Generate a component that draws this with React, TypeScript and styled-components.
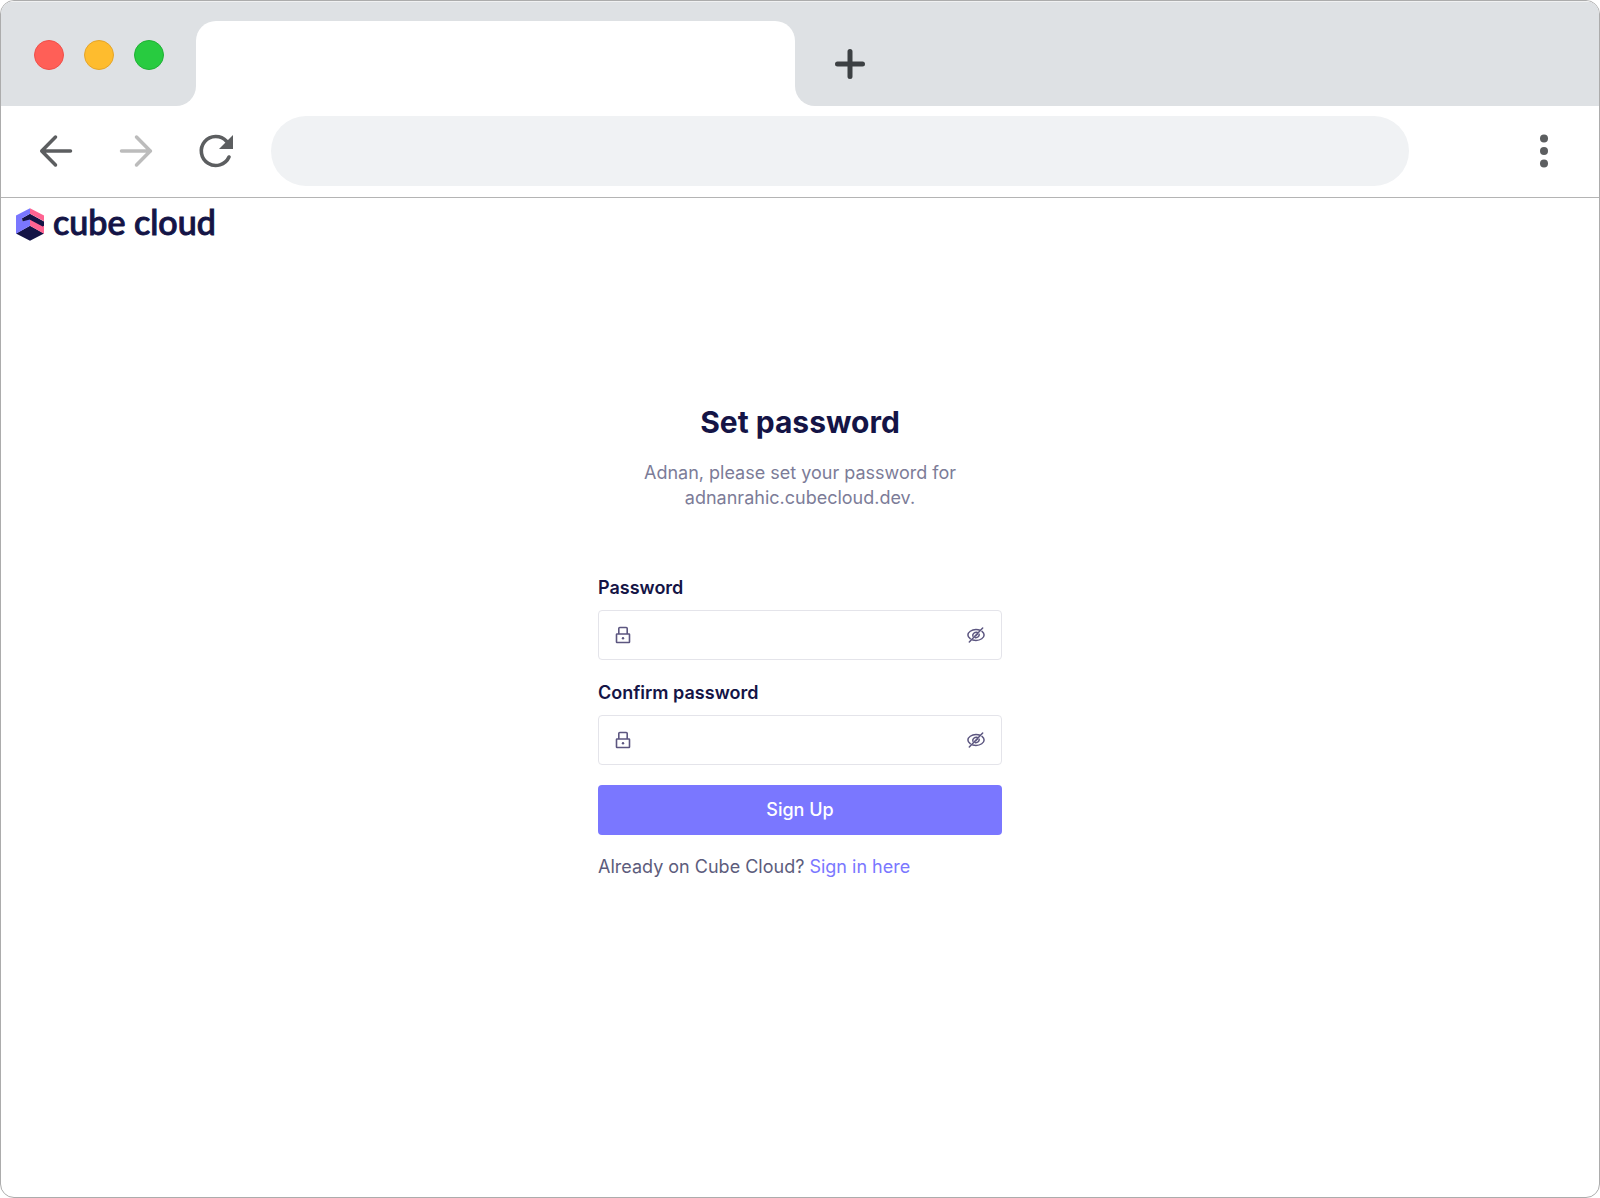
import React, { useId, useState } from "react";
import styled, { createGlobalStyle } from "styled-components";

const GlobalStyle = createGlobalStyle`
  * { box-sizing: border-box; }
  body {
    margin: 0;
    background: #fff;
    font-family: Inter, "Liberation Sans", sans-serif;
    color: #141446;
  }
`;

const Window = styled.div`
  display: flex;
  flex-direction: column;
  min-height: 100vh;
  border: 1px solid #acacac;
  border-radius: 14px;
  overflow: hidden;
  background: #fff;
`;

const TabStrip = styled.div`
  display: flex;
  height: 105px;
  border-top: 1px solid #f0f1f2;
`;

const WindowControls = styled.div`
  display: flex;
  gap: 20px;
  width: 195px;
  padding: 38px 0 0 33px;
  background: #dee1e4;
  border-bottom-right-radius: 20px;
`;

const Light = styled.button<{ $fill: string; $edge: string }>`
  width: 30px;
  height: 30px;
  padding: 0;
  border: 1px solid ${(p) => p.$edge};
  border-radius: 50%;
  background: ${(p) => p.$fill};
`;

const TabSlot = styled.div`
  width: 599px;
  padding-top: 19px;
  background: #dee1e4;
`;

const Tab = styled.div`
  height: 100%;
  background: #fff;
  border-radius: 20px 20px 0 0;
`;

const StripRest = styled.div`
  flex: 1;
  padding: 46px 0 0 39px;
  background: #dee1e4;
  border-bottom-left-radius: 20px;
`;

const IconButton = styled.button`
  display: flex;
  padding: 0;
  border: 0;
  background: none;
  color: #5c5e60;
`;

const Toolbar = styled.div`
  display: flex;
  align-items: center;
  height: 92px;
  padding: 0 50px 2px 37px;
  border-bottom: 1px solid #b4b4b4;
`;

const NavButtons = styled.div`
  display: flex;
  gap: 44px;
  margin-right: 37px;
`;

const Address = styled.input`
  flex: 1;
  min-width: 0;
  height: 70px;
  margin-right: 130px;
  padding: 0 32px;
  border: 0;
  border-radius: 35px;
  background: #f0f2f4;
  font: 24px Inter, sans-serif;
`;

const Brand = styled.header`
  display: flex;
  align-items: flex-start;
  gap: 9px;
  padding: 10px 15px 9px;
`;

const BrandName = styled.span`
  font: 500 34px/28px Lato, "Open Sans", sans-serif;
  -webkit-text-stroke: 1px #141446;
  color: #141446;
`;

const Panel = styled.main`
  display: flex;
  flex-direction: column;
  width: 100%;
  max-width: 404px;
  margin: 0 auto;
  padding-top: 152px;
`;

const Title = styled.h1`
  margin: 0;
  font-size: 30px;
  line-height: 40px;
  font-weight: 700;
  text-align: center;
`;

const Lead = styled.p`
  margin: 18px 40px 65px;
  font-size: 18px;
  line-height: 25px;
  text-align: center;
  color: #7c7c98;
`;

const Form = styled.form`
  display: flex;
  flex-direction: column;
  gap: 20px;
`;

const Field = styled.div`
  display: flex;
  flex-direction: column;
  gap: 10px;
`;

const Label = styled.label`
  font-size: 18px;
  line-height: 25px;
  font-weight: 600;
`;

const InputBox = styled.div`
  display: flex;
  align-items: center;
  gap: 12px;
  height: 50px;
  padding: 0 16px;
  border: 1px solid #e4e4ea;
  border-radius: 4px;
  color: #5c5680;
`;

const Input = styled.input`
  flex: 1;
  min-width: 0;
  border: 0;
  outline: 0;
  background: none;
  font: 18px Inter, sans-serif;
  color: #141446;
`;

const RevealButton = styled(IconButton)`
  color: inherit;
`;

const Submit = styled.button`
  height: 50px;
  padding: 0 16px 2px;
  border: 0;
  border-radius: 4px;
  background: #7a77ff;
  color: #fff;
  font: 500 18px Inter, sans-serif;
`;

const Footnote = styled.p`
  margin: 19px 0 0;
  font-size: 18px;
  line-height: 25px;
  color: #5c5c7c;
`;

const Link = styled.a`
  color: #7a77ff;
  text-decoration: none;
`;

const PlusIcon = () => (
  <svg width="32" height="32" viewBox="0 0 32 32" fill="none" stroke="#3c4043" strokeWidth="5" strokeLinecap="round">
    <path d="M16 3.500v25M3.500 16h25" />
  </svg>
);

const ArrowIcon = ({ forward = false }: { forward?: boolean }) => (
  <svg width="36" height="36" viewBox="0 0 36 36" fill="none" stroke={forward ? "#bcbcbc" : "#5c5e60"} strokeWidth="3.500" strokeLinecap="round" strokeLinejoin="round">
    <path d={forward ? "M3.500 18h29M18.500 4L32.300 18 18.500 32" : "M32.500 18H4M17.500 4L3.700 18l13.800 14"} />
  </svg>
);

const ReloadIcon = () => (
  <svg width="36" height="36" viewBox="0 0 36 36" fill="none">
    <path d="M31 24A14.500 14.500 0 1 1 28.500 8.200" stroke="#5c5e60" strokeWidth="3.600" strokeLinecap="round" />
    <path d="M35 2v14H21z" fill="#5c5e60" />
  </svg>
);

const DotsIcon = () => (
  <svg width="10" height="34" viewBox="0 0 10 34" fill="#5c5e60">
    <circle cx="5" cy="4.500" r="4" />
    <circle cx="5" cy="17" r="4" />
    <circle cx="5" cy="29.500" r="4" />
  </svg>
);

const CubeLogo = () => (
  <svg width="28" height="33" viewBox="0 0 84 98">
    <path d="M42 53L84 76 42 98 0 76z" fill="#141446" />
    <path d="M18 30L42 17l42 23v16l-8 2-34-20-22 6z" fill="#141446" />
    <path d="M42 0v17L18 30v10l24-6v19L0 77V22z" fill="#7a77ff" />
    <path d="M42 0l42 22v17L42 17z" fill="#ff6492" />
    <path d="M42 35l38 20 4-2v24L42 53z" fill="#ff6492" />
  </svg>
);

const LockIcon = () => (
  <svg width="16" height="18" viewBox="0 0 16 18" fill="none" stroke="currentColor" strokeWidth="1.600" strokeLinejoin="round">
    <rect x="1.500" y="8" width="13" height="8.500" rx="0.500" />
    <path d="M3.800 8V2.500A1 1 0 0 1 4.800 1.500h6.400a1 1 0 0 1 1 1V8" />
    <circle cx="8" cy="12.200" r="1.200" fill="currentColor" stroke="none" />
  </svg>
);

const EyeOffIcon = () => (
  <svg width="18" height="18" viewBox="0 0 18 18" fill="none" stroke="currentColor" strokeWidth="1.500" strokeLinecap="round">
    <path d="M3.200 12.700C1.800 11.600.9 10.300.9 9c0-2.800 3.600-5.400 8.100-5.400 1.500 0 2.800.2 4 .6M15 5.400c1.400 1 2.100 2.300 2.100 3.600 0 2.800-3.600 5.400-8.100 5.400-1.200 0-2.300-.2-3.300-.4" />
    <path d="M5.800 10.100C5.400 7.900 7.400 6.100 10 6.300M12.200 8.200c.2 2.100-1.500 3.700-3.800 3.500M2.300 16L15.700 2M8.500 9.900L10.500 7.900" />
  </svg>
);

const PasswordField = ({ label }: { label: string }) => {
  const id = useId();
  const [visible, setVisible] = useState(false);
  return (
    <Field>
      <Label htmlFor={id}>{label}</Label>
      <InputBox>
        <LockIcon />
        <Input id={id} type={visible ? "text" : "password"} />
        <RevealButton type="button" aria-label="Toggle visibility" onClick={() => setVisible(!visible)}>
          <EyeOffIcon />
        </RevealButton>
      </InputBox>
    </Field>
  );
};

export default function App() {
  return (
    <>
      <GlobalStyle />
      <Window>
        <TabStrip>
          <WindowControls>
            <Light aria-label="Close" $fill="#ff5f57" $edge="#f0504a" />
            <Light aria-label="Minimize" $fill="#febc2e" $edge="#e5a52a" />
            <Light aria-label="Maximize" $fill="#28cb40" $edge="#20b135" />
          </WindowControls>
          <TabSlot>
            <Tab />
          </TabSlot>
          <StripRest>
            <IconButton aria-label="New tab"><PlusIcon /></IconButton>
          </StripRest>
        </TabStrip>
        <Toolbar>
          <NavButtons>
            <IconButton aria-label="Back"><ArrowIcon /></IconButton>
            <IconButton aria-label="Forward"><ArrowIcon forward /></IconButton>
            <IconButton aria-label="Reload"><ReloadIcon /></IconButton>
          </NavButtons>
          <Address aria-label="Address" />
          <IconButton aria-label="Menu"><DotsIcon /></IconButton>
        </Toolbar>
        <Brand>
          <CubeLogo />
          <BrandName>cube cloud</BrandName>
        </Brand>
        <Panel>
          <Title>Set password</Title>
          <Lead>Adnan, please set your password for adnanrahic.cubecloud.dev.</Lead>
          <Form onSubmit={(e) => e.preventDefault()}>
            <PasswordField label="Password" />
            <PasswordField label="Confirm password" />
            <Submit type="submit">Sign Up</Submit>
          </Form>
          <Footnote>
            Already on Cube Cloud? <Link href="#">Sign in here</Link>
          </Footnote>
        </Panel>
      </Window>
    </>
  );
}
